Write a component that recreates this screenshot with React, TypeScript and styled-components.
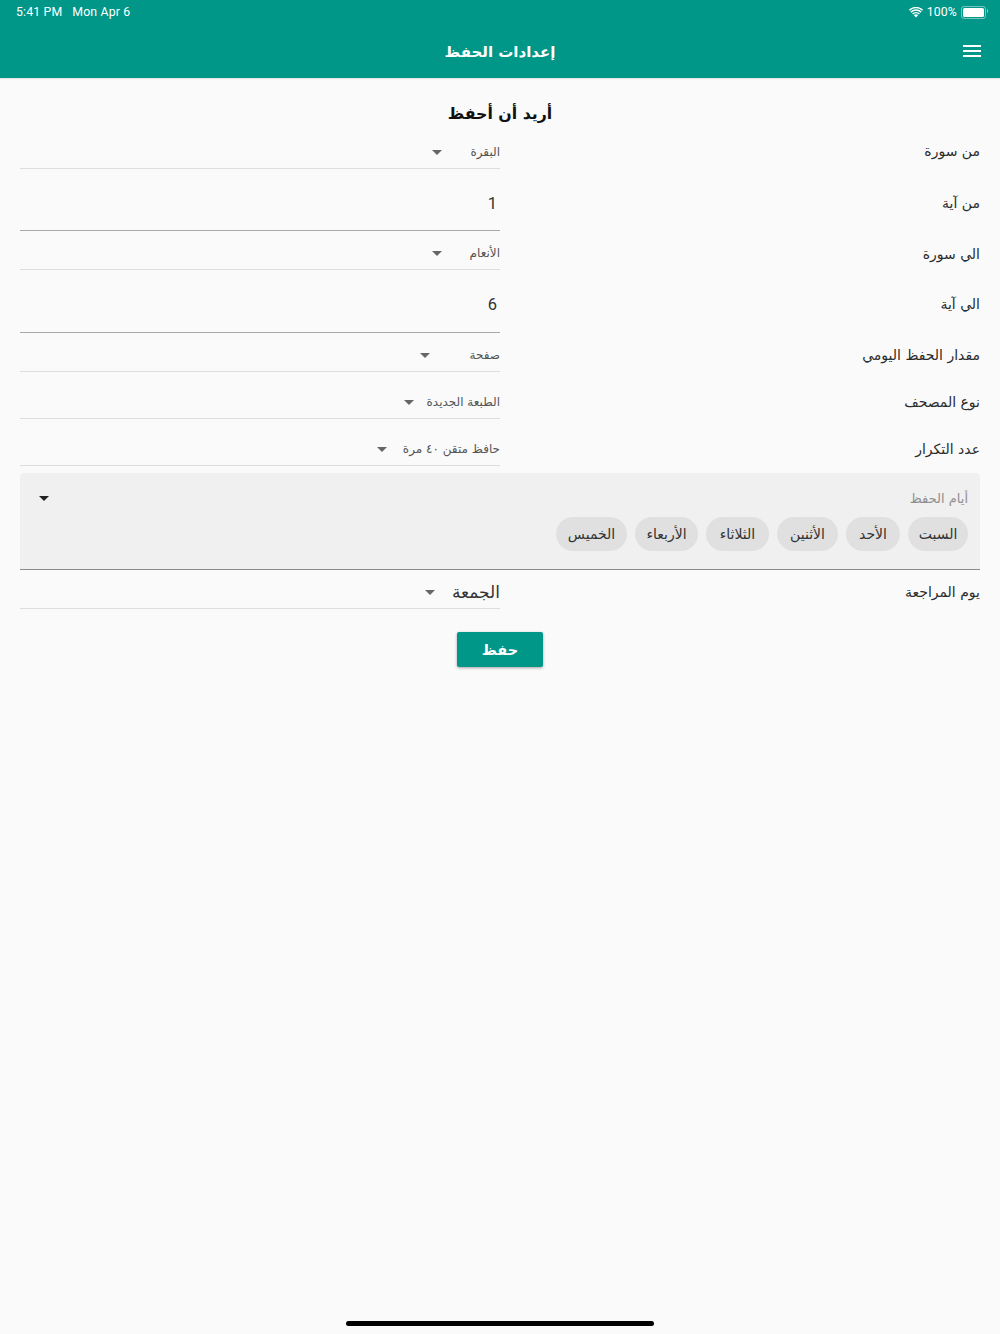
import React from "react";
import styled, { createGlobalStyle } from "styled-components";

const ARABIC = `"DejaVu Sans", "Noto Sans", sans-serif`;

const Global = createGlobalStyle`
  html, body { margin: 0; padding: 0; background: #fafafa; }
  body { font-family: ${ARABIC}; }
`;

const Page = styled.div`
  width: 1000px;
  height: 1334px;
  background: #fafafa;
  display: flex;
  flex-direction: column;
  position: relative;
  overflow: hidden;
`;

const AppBar = styled.header`
  height: 78px;
  background: #009688;
  color: #fff;
  display: flex;
  flex-direction: column;
  position: relative;
  box-shadow: 0 1px 1px rgba(0, 0, 0, 0.08);
`;

const StatusBar = styled.div`
  height: 24px;
  padding: 0 14px 0 16px;
  display: flex;
  align-items: center;
  justify-content: space-between;
  font: 12.3px/24px Roboto, sans-serif;
  letter-spacing: 0.15px;
`;

const StatusGroup = styled.div<{ $gap: number }>`
  display: flex;
  align-items: center;
  gap: ${(p) => p.$gap}px;
`;

const TitleRow = styled.div`
  flex: 1;
  display: flex;
  align-items: center;
  justify-content: center;
  padding-top: 2px;
`;

const Title = styled.h1`
  margin: 0;
  font: 700 15px/1 ${ARABIC};
  direction: rtl;
`;

const MenuIcon = styled.svg`
  position: absolute;
  right: 19px;
  top: 45px;
`;

const Content = styled.main`
  padding: 0 20px;
  display: flex;
  flex-direction: column;
`;

const Heading = styled.h2`
  margin: 0;
  height: 52px;
  display: flex;
  align-items: center;
  justify-content: center;
  padding-top: 20px;
  box-sizing: border-box;
  font: 700 15.8px/1 ${ARABIC};
  color: #111;
  direction: rtl;
`;

const Row = styled.div<{ $height: number }>`
  height: ${(p) => p.$height}px;
  display: grid;
  grid-template-columns: 480px 1fr;
  align-items: stretch;
`;

const Label = styled.div<{ $offset: number }>`
  font: 14px/1 ${ARABIC};
  color: #2b2b2b;
  text-align: right;
  direction: rtl;
  align-self: start;
  padding-top: ${(p) => p.$offset}px;
`;

const Field = styled.div<{ $strong?: boolean }>`
  border-bottom: ${(p) => (p.$strong ? "1px solid #a8a8a8" : "1px solid #dedede")};
  display: flex;
  align-items: flex-start;
  justify-content: flex-end;
  box-sizing: border-box;
`;

const Control = styled.div<{ $top: number; $gap: number }>`
  display: flex;
  align-items: center;
  gap: ${(p) => p.$gap}px;
  padding-top: ${(p) => p.$top}px;
`;

const Value = styled.span<{ $large?: boolean }>`
  font: ${(p) => (p.$large ? "17px" : "12px")}/1.2 ${ARABIC};
  color: ${(p) => (p.$large ? "#333" : "#555")};
  direction: rtl;
`;

const NumberValue = styled.span`
  font: 16.5px/1 Roboto, sans-serif;
  color: #333;
  padding: 27px 3px 0 0;
`;

const Caret = styled.i<{ $dark?: boolean }>`
  display: block;
  width: 0;
  height: 0;
  border-left: 5px solid transparent;
  border-right: 5px solid transparent;
  border-top: 5px solid ${(p) => (p.$dark ? "#222" : "#666")};
`;

const DaysBox = styled.section`
  margin-top: 7px;
  height: 97px;
  box-sizing: border-box;
  background: #f0f0f0;
  border-radius: 4px 4px 0 0;
  border-bottom: 1px solid #8a8a8a;
  padding: 17px 12px 0 19px;
  direction: rtl;
  position: relative;
`;

const DaysLabel = styled.div`
  font: 13px/18px ${ARABIC};
  color: #8f8f8f;
  height: 27px;
`;

const DaysCaret = styled.div`
  position: absolute;
  left: 19px;
  top: 23px;
`;

const Chips = styled.div`
  display: flex;
  gap: 8px;
`;

const Chip = styled.span<{ $width: number }>`
  height: 34px;
  width: ${(p) => p.$width}px;
  border-radius: 17px;
  background: #e0e0e0;
  color: #333;
  font: 14px/34px ${ARABIC};
  text-align: center;
  display: block;
`;

const SaveRow = styled.div`
  display: flex;
  justify-content: center;
  margin-top: 23px;
`;

const SaveButton = styled.button`
  width: 86px;
  height: 35px;
  border: 0;
  border-radius: 2px;
  padding: 2px 0 0;
  background: #009688;
  color: #fff;
  font: 700 14.5px/1 ${ARABIC};
  box-shadow: 0 1px 3px rgba(0, 0, 0, 0.35);
  direction: rtl;
`;

const HomeIndicator = styled.div`
  position: absolute;
  left: 346px;
  bottom: 8px;
  width: 308px;
  height: 5px;
  border-radius: 3px;
  background: #000;
`;

const Battery = styled.span`
  width: 21px;
  height: 9px;
  padding: 1px;
  border: 1px solid rgba(255, 255, 255, 0.45);
  border-radius: 3px;
  display: block;
  position: relative;
  &::before {
    content: "";
    display: block;
    width: 100%;
    height: 100%;
    border-radius: 1.5px;
    background: #fff;
  }
  &::after {
    content: "";
    position: absolute;
    right: -3px;
    top: 2.5px;
    width: 1.5px;
    height: 4px;
    background: rgba(255, 255, 255, 0.5);
    border-radius: 0 1px 1px 0;
  }
`;

type Item = { kind: "select" | "number"; label: string; value: string; height: number; gap?: number; top?: number; labelTop: number; large?: boolean };

const before: Item[] = [
  { kind: "select", label: "من سورة", value: "البقرة", height: 39, gap: 28, top: 15, labelTop: 14 },
  { kind: "number", label: "من آية", value: "1", height: 62, labelTop: 27 },
  { kind: "select", label: "الي سورة", value: "الأنعام", height: 39, gap: 28, top: 15, labelTop: 16 },
  { kind: "number", label: "الي آية", value: "6", height: 63, labelTop: 27 },
  { kind: "select", label: "مقدار الحفظ اليومي", value: "صفحة", height: 39, gap: 40, top: 15, labelTop: 15 },
  { kind: "select", label: "نوع المصحف", value: "الطبعة الجديدة", height: 47, gap: 13, top: 23, labelTop: 23 },
  { kind: "select", label: "عدد التكرار", value: "حافظ متقن ٤٠ مرة", height: 47, gap: 16, top: 23, labelTop: 23 },
];

const days = [
  { name: "السبت", width: 60 },
  { name: "الأحد", width: 54 },
  { name: "الأثنين", width: 61 },
  { name: "الثلاثاء", width: 63 },
  { name: "الأربعاء", width: 63 },
  { name: "الخميس", width: 71 },
];

const FieldRow = ({ item }: { item: Item }) => (
  <Row $height={item.height}>
    <Field $strong={item.kind === "number"}>
      {item.kind === "number" ? (
        <NumberValue>{item.value}</NumberValue>
      ) : (
        <Control $top={item.top ?? 14} $gap={item.gap ?? 8}>
          <Caret />
          <Value $large={item.large}>{item.value}</Value>
        </Control>
      )}
    </Field>
    <Label $offset={item.labelTop}>{item.label}</Label>
  </Row>
);

export default function App() {
  return (
    <Page>
      <Global />
      <AppBar>
        <StatusBar>
          <StatusGroup $gap={10}>
            <span>5:41 PM</span>
            <span>Mon Apr 6</span>
          </StatusGroup>
          <StatusGroup $gap={4}>
            <svg width="14" height="11" viewBox="0 0 14 11" aria-hidden="true">
              <path d="M7 10.6 4.9 8.3a3 3 0 0 1 4.2 0Z" fill="#fff" />
              <path d="M3.6 7a4.9 4.9 0 0 1 6.8 0" fill="none" stroke="#fff" strokeWidth="1.5" />
              <path d="M1.9 5.1a7.4 7.4 0 0 1 10.2 0" fill="none" stroke="#fff" strokeWidth="1.5" />
              <path d="M.4 3.2a9.6 9.6 0 0 1 13.2 0" fill="none" stroke="#fff" strokeWidth="1.5" />
            </svg>
            <span>100%</span>
            <Battery />
          </StatusGroup>
        </StatusBar>
        <TitleRow>
          <Title>إعدادات الحفظ</Title>
        </TitleRow>
        <MenuIcon width="18" height="12" viewBox="0 0 18 12" aria-hidden="true">
          <path d="M0 0h18v2H0zM0 5h18v2H0zM0 10h18v2H0z" fill="#fff" />
        </MenuIcon>
      </AppBar>
      <Content>
        <Heading>أريد أن أحفظ</Heading>
        {before.map((item) => (
          <FieldRow key={item.label} item={item} />
        ))}
        <DaysBox>
          <DaysLabel>أيام الحفظ</DaysLabel>
          <DaysCaret>
            <Caret $dark />
          </DaysCaret>
          <Chips>
            {days.map((d) => (
              <Chip key={d.name} $width={d.width}>{d.name}</Chip>
            ))}
          </Chips>
        </DaysBox>
        <FieldRow item={{ kind: "select", label: "يوم المراجعة", value: "الجمعة", height: 39, gap: 17, top: 12, labelTop: 15, large: true }} />
        <SaveRow>
          <SaveButton>حفظ</SaveButton>
        </SaveRow>
      </Content>
      <HomeIndicator />
    </Page>
  );
}
